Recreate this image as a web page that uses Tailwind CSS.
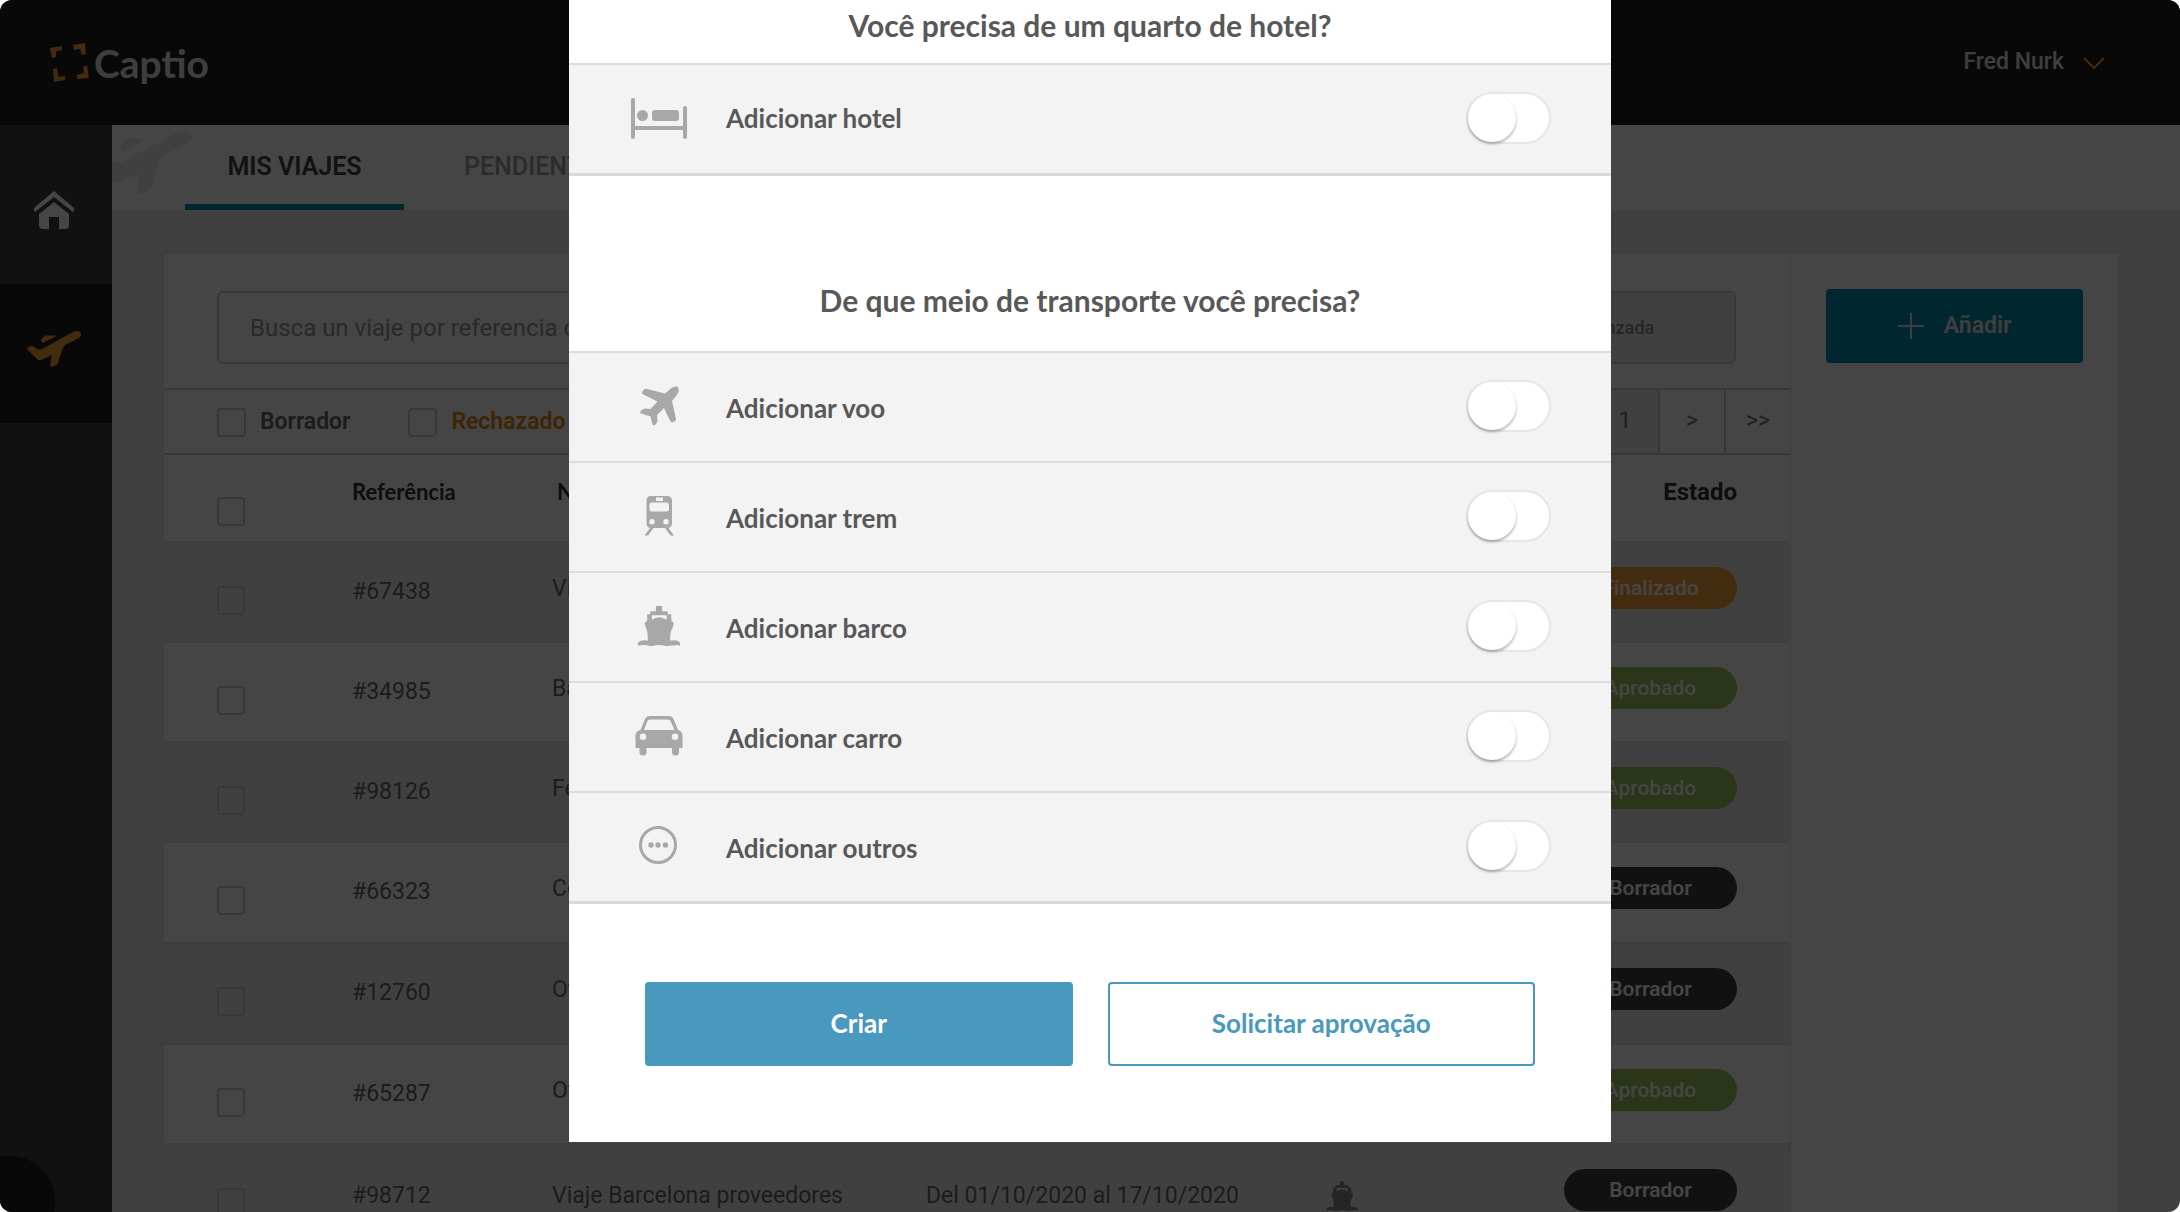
<!DOCTYPE html>
<html lang="pt">
<head>
    <meta charset="UTF-8">
    <meta name="viewport" content="width=device-width, initial-scale=1.0">
    <title>Captio - Mis viajes</title>
    <script src="https://cdn.jsdelivr.net/npm/@tailwindcss/browser@4"></script>
</head>
<body class="bg-white">

    <!-- Shared icons -->
    <svg class="hidden">
        <symbol id="takeoff" viewBox="0 0 54 36">
            <path d="M0 17 L4 15 Q6 14.500 8 16.500 L10 18 Q13 19 16 17.500 L44 2 Q48 0 51 0 Q54 1 54 4 Q54 6 50 8 L38 14 Q36 16 35 19 L31 32 Q30 34 25 36 Q23 36 23.200 33 L25 24 L14 29 Q12 30 10 28 L1 19 Q0 18 0 17Z"/>
            <path d="M14 10 Q14 7 19 4.500 L30 4.500 L16 12 Z"/>
        </symbol>
        <symbol id="boat" viewBox="0 0 42 39">
            <path d="M18 0h6v5h5.500v3H33v6.500l2.500 2 -1 4.500q-3 4-2.500 13 1-.500 4-.5 3 0 5.500 2v3q-4-1-6 0h-4q-3 2-5 0-6-1-10 0-3 1-6 0-5-1-10 0v-3q3-2 6-2 2 0 3.500.5 .500-9-2-13l-1-4.500 2.500-2V8h3V5H18zM14 9v4.500Q21 8.500 28.500 13.500V9z" fill-rule="evenodd"/>
        </symbol>
    </svg>

    <div class="relative flex h-screen flex-col overflow-hidden rounded-xl bg-[#ededed] font-['Roboto',sans-serif]">

        <!-- Header -->
        <header class="flex h-[125px] shrink-0 items-center justify-between bg-[#1e1e1e] pr-[75px] pl-[50px]">
            <a href="#" class="flex items-center gap-[5px] font-['Lato',sans-serif] text-[39px] leading-[40px] font-bold text-[#e6e6e6]">
                <svg class="h-[39px] w-[39px]" viewBox="0 0 39 39" fill="#f89f3b">
                    <path d="M0 5 L12 3 L12 7 L6 8.500 L6 14 L2 15Z"/>
                    <path d="M23 2 L35 0 L36 11 L32 12 L30 6 L24 7Z"/>
                    <path d="M3 26 L7 25 L8.500 34 L15 33 L15 37 L4 39Z"/>
                    <path d="M33 24 L37 22 L39 35 L27 36 L27 32 L34 30Z"/>
                </svg>
                Captio
            </a>
            <button class="flex items-center gap-[19px] text-[23px] font-medium text-[#e6e6e6]">
                Fred Nurk
                <svg class="h-[12px] w-[22px]" viewBox="0 0 22 12" fill="none" stroke="#f89f3b" stroke-width="2"><path d="M1 1l10 10L21 1"/></svg>
            </button>
        </header>

        <div class="flex min-h-0 flex-1">

            <!-- Sidebar -->
            <nav class="w-[112px] shrink-0 bg-[#3f3f3f]">
                <a href="#" aria-label="Inicio" class="flex h-[159px] items-center justify-center pt-[10px] pr-1">
                    <svg class="h-[38px] w-[42px]" viewBox="0 0 42 38" fill="#fff">
                        <path d="M21 0 L41 17 Q42 19 40 21 L21 6 L2 21 Q0 19 1 17Z"/>
                        <path d="M21 11 L36 23 V34 Q36 38 32 38 H26 V26 H16 V38 H10 Q6 38 6 34 V23Z"/>
                    </svg>
                </a>
                <a href="#" aria-label="Viajes" class="flex h-[139px] items-center justify-center bg-[#1e1e1e] pr-1 pb-[10px]">
                    <svg class="h-[36px] w-[54px]" fill="#f89f3b"><use href="#takeoff"/></svg>
                </a>
            </nav>

            <div class="min-w-0 flex-1">

                <!-- Tabs -->
                <div class="relative flex h-[85px] gap-4 overflow-hidden bg-white pl-[73px] text-[25px] font-medium">
                    <svg class="absolute top-[5px] -left-[17px] h-[65px] w-[97px]" fill="#ededed"><use href="#takeoff"/></svg>
                    <a href="#" class="relative flex w-[219px] items-center justify-center border-b-[6px] border-[#008db2] pt-1 font-semibold text-[#444]">MIS VIAJES</a>
                    <a href="#" class="relative flex items-center border-b-[6px] border-transparent px-[44px] pt-1 text-[#9f9f9f]">PENDIENTES</a>
                </div>

                <!-- Card -->
                <div class="mt-[44px] mr-[62px] ml-[52px] flex bg-white shadow-[0_0_6px_2px_#e2e2e2]">
                    <div class="min-w-0 flex-1 border-r border-[#e6e6e6]">
                        <div class="flex pt-[37px] pr-[54px] pb-[24px] pl-[53px]">
                            <input type="text" aria-label="Buscar" placeholder="Busca un viaje por referencia o nombre" class="h-[73px] min-w-0 flex-1 rounded-l-md border-2 border-[#cfcfcf] px-[31px] text-[24px] placeholder:text-[#999]">
                            <button class="h-[73px] w-[323px] rounded-r-md border-2 border-l-0 border-[#cfcfcf] bg-[#ededed] text-[18px] font-medium text-[#888]">Búsqueda avanzada</button>
                        </div>

                        <!-- Filters and pagination -->
                        <div class="flex h-[67px] justify-between border-y-2 border-[#cfcfcf] pl-[53px]">
                            <div class="flex items-center gap-[58px] pt-[2px] text-[23px] font-semibold">
                                <label class="flex items-center gap-[14px] text-[#686868]"><input type="checkbox" class="h-[29px] w-[29px] appearance-none rounded border-2 border-[#d0d0d0]">Borrador</label>
                                <label class="flex items-center gap-[14px] text-[#e08a10]"><input type="checkbox" class="h-[29px] w-[29px] appearance-none rounded border-2 border-[#d0d0d0]">Rechazado</label>
                            </div>
                            <div class="flex text-[23px] text-[#777]">
                                <button class="w-[66px] bg-[#ededed]">1</button>
                                <button class="w-[66px] border-l-2 border-[#cfcfcf]">&gt;</button>
                                <button class="w-[66px] border-l-2 border-[#cfcfcf]">&gt;&gt;</button>
                            </div>
                        </div>

                        <!-- Trips -->
                        <table class="w-full table-fixed border-collapse text-left text-[23px] leading-[28px] text-[#686868]">
                            <colgroup>
                                <col class="w-[188px]">
                                <col class="w-[200px]">
                                <col class="w-[374px]">
                                <col class="w-[400px]">
                                <col>
                                <col class="w-[240px]">
                            </colgroup>
                            <thead>
                                <tr class="h-[87px] align-top font-['Lato',sans-serif] text-[22px] text-[#333]">
                                    <th class="pt-[42px] pl-[53px]"><input type="checkbox" aria-label="Todos" class="block h-[29px] w-[28px] appearance-none rounded border-2 border-[#d0d0d0]"></th>
                                    <th class="pt-[23px]">Referência</th>
                                    <th class="pt-[23px] pl-[5px]">Nombre</th>
                                    <th class="pt-[23px]">Fechas</th>
                                    <th class="pt-[23px]"></th>
                                    <th class="pt-[23px] pr-[53px] text-right font-['Roboto',sans-serif] text-[24px]">Estado</th>
                                </tr>
                            </thead>
                            <tbody>
                                <tr class="h-[100px] border-t-2 border-[#e6e6e6] bg-[#ededed] align-top">
                                    <td class="pt-[43px] pl-[53px]"><input type="checkbox" aria-label="#67438" class="block h-[29px] w-[28px] appearance-none rounded border-2 border-[#d0d0d0]"></td>
                                    <td class="pt-[35px]">#67438</td>
                                    <td class="pt-[32px]">Viaje Madrid</td>
                                    <td></td>
                                    <td></td>
                                    <td class="pt-[24px] pr-[53px]"><span class="ml-auto flex h-[42px] w-[173px] items-center justify-center rounded-full bg-[#f89f3b] text-[21px] font-medium text-white">Finalizado</span></td>
                                </tr>
                                <tr class="h-[100px] border-t-2 border-[#e6e6e6] align-top">
                                    <td class="pt-[43px] pl-[53px]"><input type="checkbox" aria-label="#34985" class="block h-[29px] w-[28px] appearance-none rounded border-2 border-[#d0d0d0]"></td>
                                    <td class="pt-[35px]">#34985</td>
                                    <td class="pt-[32px]">Barcelona</td>
                                    <td></td>
                                    <td></td>
                                    <td class="pt-[24px] pr-[53px]"><span class="ml-auto flex h-[42px] w-[173px] items-center justify-center rounded-full bg-[#9cc460] text-[21px] font-medium text-white">Aprobado</span></td>
                                </tr>
                                <tr class="h-[100px] border-t-2 border-[#e6e6e6] bg-[#ededed] align-top">
                                    <td class="pt-[43px] pl-[53px]"><input type="checkbox" aria-label="#98126" class="block h-[29px] w-[28px] appearance-none rounded border-2 border-[#d0d0d0]"></td>
                                    <td class="pt-[35px]">#98126</td>
                                    <td class="pt-[32px]">Feria</td>
                                    <td></td>
                                    <td></td>
                                    <td class="pt-[24px] pr-[53px]"><span class="ml-auto flex h-[42px] w-[173px] items-center justify-center rounded-full bg-[#9cc460] text-[21px] font-medium text-white">Aprobado</span></td>
                                </tr>
                                <tr class="h-[101px] border-t-2 border-[#e6e6e6] align-top">
                                    <td class="pt-[43px] pl-[53px]"><input type="checkbox" aria-label="#66323" class="block h-[29px] w-[28px] appearance-none rounded border-2 border-[#d0d0d0]"></td>
                                    <td class="pt-[35px]">#66323</td>
                                    <td class="pt-[32px]">Congreso</td>
                                    <td></td>
                                    <td></td>
                                    <td class="pt-[24px] pr-[53px]"><span class="ml-auto flex h-[42px] w-[173px] items-center justify-center rounded-full bg-[#404040] text-[21px] font-semibold text-white">Borrador</span></td>
                                </tr>
                                <tr class="h-[101px] border-t-2 border-[#e6e6e6] bg-[#ededed] align-top">
                                    <td class="pt-[43px] pl-[53px]"><input type="checkbox" aria-label="#12760" class="block h-[29px] w-[28px] appearance-none rounded border-2 border-[#d0d0d0]"></td>
                                    <td class="pt-[35px]">#12760</td>
                                    <td class="pt-[32px]">Oficina</td>
                                    <td></td>
                                    <td></td>
                                    <td class="pt-[24px] pr-[53px]"><span class="ml-auto flex h-[42px] w-[173px] items-center justify-center rounded-full bg-[#404040] text-[21px] font-semibold text-white">Borrador</span></td>
                                </tr>
                                <tr class="h-[100px] border-t-2 border-[#e6e6e6] align-top">
                                    <td class="pt-[43px] pl-[53px]"><input type="checkbox" aria-label="#65287" class="block h-[29px] w-[28px] appearance-none rounded border-2 border-[#d0d0d0]"></td>
                                    <td class="pt-[35px]">#65287</td>
                                    <td class="pt-[32px]">Oficina</td>
                                    <td></td>
                                    <td></td>
                                    <td class="pt-[24px] pr-[53px]"><span class="ml-auto flex h-[42px] w-[173px] items-center justify-center rounded-full bg-[#9cc460] text-[21px] font-medium text-white">Aprobado</span></td>
                                </tr>
                                <tr class="h-[100px] border-t-2 border-[#e6e6e6] bg-[#ededed] align-top">
                                    <td class="pt-[43px] pl-[53px]"><input type="checkbox" aria-label="#98712" class="block h-[29px] w-[28px] appearance-none rounded border-2 border-[#d0d0d0]"></td>
                                    <td class="pt-[37px]">#98712</td>
                                    <td class="pt-[37px]">Viaje Barcelona proveedores</td>
                                    <td class="pt-[37px]">Del 01/10/2020 al 17/10/2020</td>
                                    <td class="pt-[35px]"><svg class="h-[32px] w-[32px]" fill="#8a8a8a"><use href="#boat"/></svg></td>
                                    <td class="pt-[24px] pr-[53px]"><span class="ml-auto flex h-[42px] w-[173px] items-center justify-center rounded-full bg-[#404040] text-[21px] font-semibold text-white">Borrador</span></td>
                                </tr>
                            </tbody>
                        </table>
                    </div>

                    <div class="w-[327px] shrink-0 px-[35px] pt-[35px]">
                        <button class="flex h-[74px] w-full items-center justify-center gap-[20px] rounded bg-[#008db2] text-[23px] font-semibold text-[#e6e6e6]">
                            <svg class="h-[26px] w-[26px]" viewBox="0 0 26 26" stroke="#e6e6e6" stroke-width="2"><path d="M13 0v26M0 13h26"/></svg>
                            Añadir
                        </button>
                    </div>
                </div>
            </div>
        </div>

        <!-- Chat bubble -->
        <button aria-label="Chat" class="absolute -bottom-[34px] -left-[35px] h-[90px] w-[90px] rounded-full bg-[#1e1e1e]"></button>

        <!-- Modal -->
        <div class="absolute inset-0 flex items-start justify-center bg-black/73">
            <form class="w-full max-w-[1042px] bg-white font-['Lato',sans-serif] text-[26px] font-bold text-[#585858]">
                <h2 class="pt-[7px] pb-[20px] text-center text-[30px] leading-[36px]">Você precisa de um quarto de hotel?</h2>
                <div class="border-b-[3px] border-[#dadada] bg-[#f3f3f3]">
                    <label class="flex h-[110px] items-center border-t-2 border-[#dcdcdc] pr-[60px] pb-[2px] pl-[62px]">
                        <svg class="h-[41px] w-[56px]" viewBox="0 0 56 41" fill="#a8a8a8">
                            <rect width="4" height="41" rx="2"/>
                            <rect x="52" y="8" width="4" height="33" rx="2"/>
                            <rect x="2" y="28" width="52" height="4"/>
                            <circle cx="11.500" cy="17.500" r="5.500"/>
                            <rect x="21" y="12" width="27" height="11" rx="3"/>
                        </svg>
                        <span class="flex-1 pl-[39px]">Adicionar hotel</span>
                        <input type="checkbox" class="relative h-[52px] w-[85px] appearance-none rounded-full border-2 border-[#e6e6e6] bg-white before:absolute before:top-0 before:left-0 before:h-[48px] before:w-[48px] before:rounded-full before:bg-white before:shadow-[0_2px_3px_#00000050] checked:bg-[#4998be] checked:before:left-[33px]">
                    </label>
                </div>

                <h2 class="pt-[106px] pb-[33px] text-center text-[30px] leading-[36px]">De que meio de transporte você precisa?</h2>
                <div class="border-b-[3px] border-[#dadada] bg-[#f3f3f3]">
                    <label class="flex h-[110px] items-center border-t-2 border-[#dcdcdc] pr-[60px] pb-[2px] pl-[62px]">
                        <svg class="h-[40px] w-[56px]" viewBox="0 0 56 40" fill="#a8a8a8">
                            <path d="M11 6 L13 3.500 Q14 2.500 16 3 L34 7.500 L40.500 2 Q43 0 46 0.500 Q48.500 2.500 47.500 6 Q47 8 41 15 L45 33 Q45 35 41.500 36.500 Q40 36.500 39 34.500 L33 22 L26 29 L26.500 35 Q26 38 23 39.500 Q21.500 39 21 37 L19.500 30.500 L10 27.500 Q8.500 26.500 9.500 25 Q12 22.500 14 22.500 L19.500 23 L26.500 15.500 L12.500 8.500 Q10.500 7.500 11 6Z"/>
                        </svg>
                        <span class="flex-1 pt-1 pl-[39px]">Adicionar voo</span>
                        <input type="checkbox" class="relative h-[52px] w-[85px] appearance-none rounded-full border-2 border-[#e6e6e6] bg-white before:absolute before:top-0 before:left-0 before:h-[48px] before:w-[48px] before:rounded-full before:bg-white before:shadow-[0_2px_3px_#00000050] checked:bg-[#4998be] checked:before:left-[33px]">
                    </label>
                    <label class="flex h-[110px] items-center border-t-2 border-[#dcdcdc] pr-[60px] pb-[2px] pl-[62px]">
                        <svg class="h-[40px] w-[56px]" viewBox="0 0 56 40" fill="#a8a8a8">
                            <path fill-rule="evenodd" d="M20 0H36Q41 0 41 5V27Q41 32 36 32H20Q15.500 32 15.500 27V5Q15.500 0 20 0ZM25 1.500V5H32V1.500ZM21 6.500Q18.500 6.500 18.500 9V13Q18.500 15.500 21 15.500H35.500Q38 15.500 38 13V9Q38 6.500 35.500 6.500ZM21 23A2.700 2.700 0 1 0 21 28.400A2.700 2.700 0 1 0 21 23ZM35 23A2.700 2.700 0 1 0 35 28.400A2.700 2.700 0 1 0 35 23Z"/>
                            <path d="M19 32h3.500L17 39.500h-3.500ZM34 32h3.500L43 39.500h-3.500Z"/>
                        </svg>
                        <span class="flex-1 pt-1 pl-[39px]">Adicionar trem</span>
                        <input type="checkbox" class="relative h-[52px] w-[85px] appearance-none rounded-full border-2 border-[#e6e6e6] bg-white before:absolute before:top-0 before:left-0 before:h-[48px] before:w-[48px] before:rounded-full before:bg-white before:shadow-[0_2px_3px_#00000050] checked:bg-[#4998be] checked:before:left-[33px]">
                    </label>
                    <label class="flex h-[110px] items-center border-t-2 border-[#dcdcdc] pr-[60px] pb-[2px] pl-[62px]">
                        <svg class="h-[40px] w-[56px]" fill="#a8a8a8"><use href="#boat"/></svg>
                        <span class="flex-1 pt-1 pl-[39px]">Adicionar barco</span>
                        <input type="checkbox" class="relative h-[52px] w-[85px] appearance-none rounded-full border-2 border-[#e6e6e6] bg-white before:absolute before:top-0 before:left-0 before:h-[48px] before:w-[48px] before:rounded-full before:bg-white before:shadow-[0_2px_3px_#00000050] checked:bg-[#4998be] checked:before:left-[33px]">
                    </label>
                    <label class="flex h-[110px] items-center border-t-2 border-[#dcdcdc] pr-[60px] pb-[2px] pl-[62px]">
                        <svg class="h-[40px] w-[56px]" viewBox="0 0 56 40" fill="#a8a8a8">
                            <path fill-rule="evenodd" d="M18 0H38Q41 0 42.500 3L47 14Q51.500 15 51.500 20V32H48V36Q48 39.500 44.500 39.500Q41 39.500 41 36V32H15.500V36Q15.500 39.500 12 39.500Q8.500 39.500 8.500 36V32H4.500V20Q4.500 15 9.500 14L14 3Q15.500 0 18 0ZM19 3.500Q17 3.500 16.500 5L13 14H43.500L39.500 5Q39 3.500 37 3.500ZM12 17.500A3.200 3.200 0 1 0 12 24A3.200 3.200 0 1 0 12 17.500ZM44 17.500A3.200 3.200 0 1 0 44 24A3.200 3.200 0 1 0 44 17.500Z"/>
                        </svg>
                        <span class="flex-1 pt-1 pl-[39px]">Adicionar carro</span>
                        <input type="checkbox" class="relative h-[52px] w-[85px] appearance-none rounded-full border-2 border-[#e6e6e6] bg-white before:absolute before:top-0 before:left-0 before:h-[48px] before:w-[48px] before:rounded-full before:bg-white before:shadow-[0_2px_3px_#00000050] checked:bg-[#4998be] checked:before:left-[33px]">
                    </label>
                    <label class="flex h-[110px] items-center border-t-2 border-[#dcdcdc] pr-[60px] pb-[2px] pl-[62px]">
                        <svg class="h-[40px] w-[56px]" viewBox="0 0 56 40" fill="#a8a8a8">
                            <circle cx="27" cy="19" r="17.500" fill="none" stroke="#a8a8a8" stroke-width="3"/>
                            <circle cx="20" cy="19" r="2.700"/>
                            <circle cx="27" cy="19" r="2.700"/>
                            <circle cx="34.500" cy="19" r="2.700"/>
                        </svg>
                        <span class="flex-1 pt-1 pl-[39px]">Adicionar outros</span>
                        <input type="checkbox" class="relative h-[52px] w-[85px] appearance-none rounded-full border-2 border-[#e6e6e6] bg-white before:absolute before:top-0 before:left-0 before:h-[48px] before:w-[48px] before:rounded-full before:bg-white before:shadow-[0_2px_3px_#00000050] checked:bg-[#4998be] checked:before:left-[33px]">
                    </label>
                </div>

                <div class="flex gap-[35px] px-[76px] pt-[78px] pb-[76px]">
                    <button type="button" class="h-[84px] flex-1 rounded border-2 border-[#4998be] bg-[#4998be] pb-[2px] text-white">Criar</button>
                    <button type="button" class="h-[84px] flex-1 rounded border-2 border-[#4998be] bg-white pb-[2px] text-[#4998be]">Solicitar aprovação</button>
                </div>
            </form>
        </div>
    </div>

</body>
</html>
